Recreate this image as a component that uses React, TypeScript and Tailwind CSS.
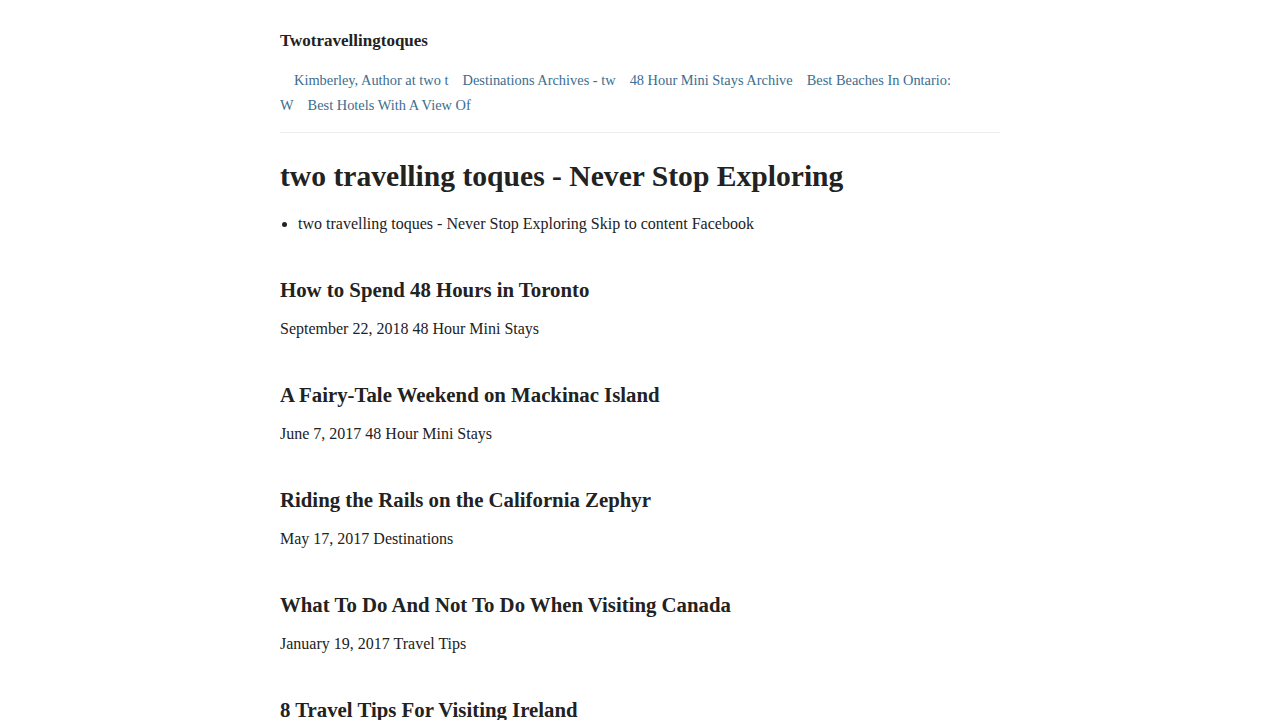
const navLinks = [
  "Kimberley, Author at two t",
  "Destinations Archives - tw",
  "48 Hour Mini Stays Archive",
  "Best Beaches In Ontario: W",
  "Best Hotels With A View Of",
];

const posts = [
  { title: "How to Spend 48 Hours in Toronto", date: "September 22, 2018", cat: "48 Hour Mini Stays" },
  { title: "A Fairy-Tale Weekend on Mackinac Island", date: "June 7, 2017", cat: "48 Hour Mini Stays" },
  { title: "Riding the Rails on the California Zephyr", date: "May 17, 2017", cat: "Destinations" },
  { title: "What To Do And Not To Do When Visiting Canada", date: "January 19, 2017", cat: "Travel Tips" },
  { title: "8 Travel Tips For Visiting Ireland", date: "December 2, 2016", cat: "Travel Tips" },
];

export default function App() {
  return (
    <div className="min-h-screen bg-white text-[#222] font-['Liberation_Serif',serif]">
      <div className="mx-auto w-[720px]">
        {/* Header */}
        <header className="pt-[31px] pb-[14px] border-b border-[#eee]">
          <div className="text-[17px] font-bold leading-[20px]">Twotravellingtoques</div>
          <nav className="mt-[17px] text-[14.4px] leading-[25px]">
            {navLinks.map((l) => (
              <a key={l} href="#" className="ml-[14px] text-[#3b6e8f]">
                {l}
              </a>
            ))}
          </nav>
        </header>

        <main className="pt-[25px]">
          <h1 className="text-[29.6px] font-bold leading-[36px]">two travelling toques - Never Stop Exploring</h1>
          <ul className="mt-[18px] list-disc pl-[18px] text-[16px] leading-[24px]">
            <li>two travelling toques - Never Stop Exploring Skip to content Facebook</li>
          </ul>

          <div className="mt-[41px] flex flex-col gap-[41px]">
            {posts.map((p) => (
              <article key={p.title}>
                <h2 className="text-[20.8px] font-bold leading-[26px]">{p.title}</h2>
                <p className="mt-[14px] text-[16px] leading-[24px]">
                  {p.date} {p.cat}
                </p>
              </article>
            ))}
          </div>
        </main>
      </div>
    </div>
  );
}
